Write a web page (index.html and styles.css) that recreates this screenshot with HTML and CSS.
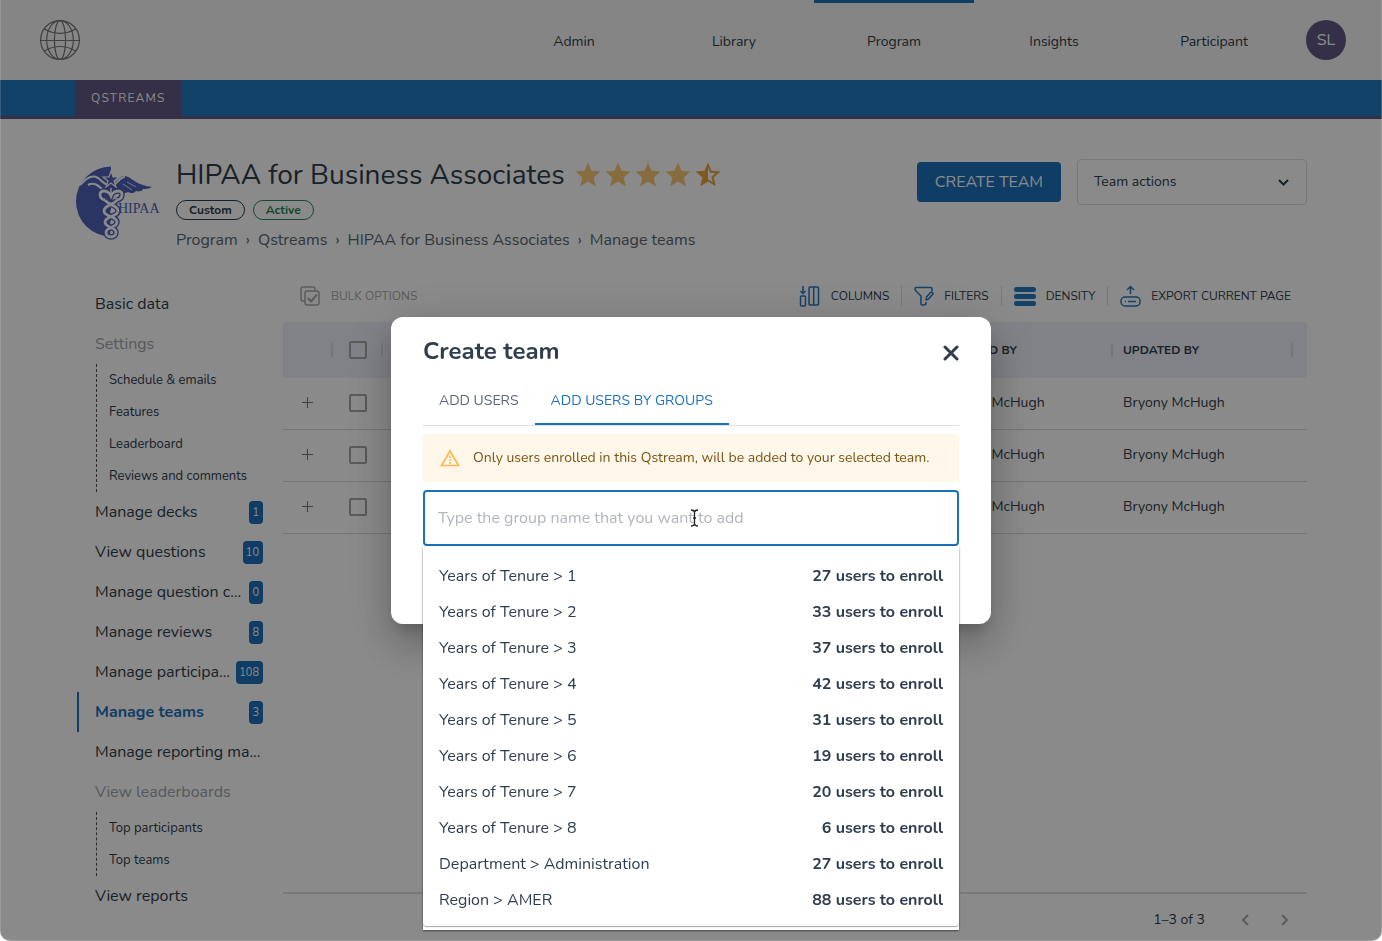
FILE: index.html
```html
<!doctype html>
<html lang="en">
  <head>
    <meta charset="UTF-8" />
    <meta name="viewport" content="width=device-width, initial-scale=1.0" />
    <title>HIPAA for Business Associates - Manage teams</title>
    <link rel="stylesheet" href="styles.css">
  </head>
  <body>
    <header class="topbar">
      <a class="logo" href="#" aria-label="Home">
        <svg width="40" height="40" viewBox="0 0 40 40" fill="none" stroke="currentColor" stroke-width="1.200">
          <circle cx="20" cy="20" r="19.4" />
          <ellipse cx="20" cy="20" rx="13.3" ry="19.4" />
          <ellipse cx="20" cy="20" rx="5.6" ry="19.4" />
          <path d="M.6 20.500h38.800M4.500 9q7 4.300 15.500 4.300T35.500 9M4.500 31q7-4.500 15.500-4.500T35.500 31" />
        </svg>
      </a>
      <nav class="main-nav">
        <a href="#">Admin</a>
        <a href="#">Library</a>
        <a href="#" class="active">Program</a>
        <a href="#">Insights</a>
        <a href="#">Participant</a>
      </nav>
      <button class="avatar">SL</button>
    </header>

    <nav class="subnav">
      <div class="container">
        <a href="#">QSTREAMS</a>
      </div>
    </nav>

    <section class="hero container">
      <svg class="hero-logo" width="85" height="76" viewBox="0 0 85 76">
        <path d="M36 2.500A35 35 0 0 0 36 72.500z" fill="#4f62b8" />
        <!-- wings -->
        <path d="M4 23C10 17 13 12 19 12s8 7 17 8c6-1 7-8 14-8 7 1 10 9 27 11-3 2-7 2-9 2 0 2-4 3-7 2-1 2-5 3-8 1-3 2-7 1-10-2l-7 2-8-2c-7-4-12-7-24-3z" fill="#4f62b8" />
        <path d="M5 21C10 16 13 12.500 19 12.500s8 8 15 8.500M36 28l-8-2c-5-5-9-8-15-5M38 21c5-1 6-8 12-8" fill="none" stroke="#fff" stroke-width="2" />
        <path d="M52 18l9 5M48 20l9 6" stroke="#fff" stroke-width=".8" />
        <path d="M36 7l2 6h6l-5 4 2 6-5-4-5 4 2-6-5-4h6z" fill="#4f62b8" stroke="#fff" stroke-width="1.200" />
        <!-- staff and snakes -->
        <path d="M30 36c-6-1-7-9-1-9 5 0 7 5 7 5s2-5 7-5c6 0 5 8-1 9M30 36c3 5 13 5 13 11s-13 5-13 11 11 5 11 10-5 5-5 5M42 36c-3 5-13 5-13 11s13 5 13 11-11 5-11 10 5 5 5 5" fill="none" stroke="#4f62b8" stroke-width="5.500" />
        <path d="M30 36c-6-1-7-9-1-9 5 0 7 5 7 5s2-5 7-5c6 0 5 8-1 9M30 36c3 5 13 5 13 11s-13 5-13 11 11 5 11 10-5 5-5 5M42 36c-3 5-13 5-13 11s13 5 13 11-11 5-11 10 5 5 5 5" fill="none" stroke="#fff" stroke-width="2.800" />
        <path d="M36 24v8M36 46v3M36 57v3M36 67v3" stroke="#fff" stroke-width="1.500" />
        <text x="43" y="49" class="hero-logo-text">HIPAA</text>
      </svg>
      <div class="hero-info">
        <div class="hero-title">
          <h1>HIPAA for Business Associates</h1>
          <div class="stars" role="img" aria-label="Rated 4.5 out of 5">
            <svg viewBox="0 0 24 24"><path d="M12 17.270L18.180 21l-1.640-7.030L22 9.240l-7.190-.61L12 2 9.190 8.630 2 9.240l5.460 4.730L5.820 21z" /></svg>
            <svg viewBox="0 0 24 24"><path d="M12 17.270L18.180 21l-1.640-7.030L22 9.240l-7.190-.61L12 2 9.190 8.630 2 9.240l5.460 4.730L5.820 21z" /></svg>
            <svg viewBox="0 0 24 24"><path d="M12 17.270L18.180 21l-1.640-7.030L22 9.240l-7.190-.61L12 2 9.190 8.630 2 9.240l5.460 4.730L5.820 21z" /></svg>
            <svg viewBox="0 0 24 24"><path d="M12 17.270L18.180 21l-1.640-7.030L22 9.240l-7.190-.61L12 2 9.190 8.630 2 9.240l5.460 4.730L5.820 21z" /></svg>
            <svg viewBox="0 0 24 24" class="half"><path d="M22 9.240l-7.190-.62L12 2 9.190 8.630 2 9.240l5.460 4.730L5.820 21 12 17.270 18.180 21l-1.630-7.030L22 9.240zM12 15.400V6.100l1.710 4.040 4.380.38-3.320 2.880 1 4.280L12 15.400z" /></svg>
          </div>
        </div>
        <div class="tags">
          <span class="tag">Custom</span>
          <span class="tag tag-active">Active</span>
        </div>
        <nav class="breadcrumbs">
          <a href="#">Program</a><span>›</span><a href="#">Qstreams</a><span>›</span><a href="#">HIPAA for Business Associates</a><span>›</span><a href="#">Manage teams</a>
        </nav>
      </div>
      <div class="hero-actions">
        <button class="btn-primary">CREATE TEAM</button>
        <div class="select-wrap">
          <select aria-label="Team actions">
            <option>Team actions</option>
          </select>
          <svg width="11" height="7" viewBox="0 0 11 7" fill="none" stroke="currentColor" stroke-width="2"><path d="M1 1l4.500 4.500L10 1" /></svg>
        </div>
      </div>
    </section>

    <main class="content container">
      <aside class="sidebar">
        <a class="item" href="#">Basic data</a>
        <span class="item muted">Settings</span>
        <div class="sub">
          <a href="#">Schedule &amp; emails</a>
          <a href="#">Features</a>
          <a href="#">Leaderboard</a>
          <a href="#">Reviews and comments</a>
        </div>
        <a class="item" href="#">Manage decks <span class="badge">1</span></a>
        <a class="item" href="#">View questions <span class="badge">10</span></a>
        <a class="item" href="#">Manage question c... <span class="badge">0</span></a>
        <a class="item" href="#">Manage reviews <span class="badge">8</span></a>
        <a class="item" href="#">Manage participa... <span class="badge">108</span></a>
        <a class="item current" href="#">Manage teams <span class="badge">3</span></a>
        <a class="item" href="#">Manage reporting ma...</a>
        <span class="item muted">View leaderboards</span>
        <div class="sub">
          <a href="#">Top participants</a>
          <a href="#">Top teams</a>
        </div>
        <a class="item" href="#">View reports</a>
      </aside>

      <section class="grid">
        <div class="toolbar">
          <button class="bulk" disabled>
            <svg width="22" height="20" viewBox="-1 0 22 20" fill="none" stroke="currentColor" stroke-width="1.500" stroke-linejoin="round">
              <path d="M4.500 15H3a2 2 0 0 1-2-2V3a2 2 0 0 1 2-2h10a2 2 0 0 1 2 2v1.500" />
              <rect x="5" y="5" width="14" height="14" rx="2" />
              <path d="M8 12l3 3.500 6-7" stroke-width="2" />
            </svg>
            BULK OPTIONS
          </button>
          <button>
            <svg width="22" height="22" viewBox="0 0 22 22" fill="none" stroke="currentColor" stroke-width="1.500">
              <path d="M4 1v7M1.500 6L4 8.500 6.500 6" />
              <rect x="1.500" y="11" width="5" height="10" rx="1" />
              <rect x="10" y="2" width="9.500" height="18" rx="1" />
              <path d="M14.700 2v18" />
            </svg>
            COLUMNS
          </button>
          <button>
            <svg width="20" height="20" viewBox="0 0 20 20" fill="none" stroke="currentColor" stroke-width="1.500" stroke-linejoin="round">
              <path d="M18 5V2.500q0-1-1-1H2q-1 0-1 1 0 2 2 3.500l4 4v8q0 1 1 1h2q2 0 2-2v-1" />
              <path d="M12 14l.5-3 4-4.500q1-1 2 0t0 2l-4 4.500z" />
            </svg>
            FILTERS
          </button>
          <button>
            <svg width="22" height="20" viewBox="0 0 22 20" fill="currentColor">
              <rect x="0" y="1" width="22" height="5" rx="2.500" />
              <rect x="0" y="8" width="22" height="5" rx="2.500" />
              <rect x="0" y="15" width="22" height="5" rx="2.500" />
            </svg>
            DENSITY
          </button>
          <button>
            <svg width="21" height="22" viewBox="0 0 21 22" fill="none" stroke="currentColor" stroke-width="1.500">
              <path d="M10.500 9V1.500M7 5l3.500-3.500L14 5" />
              <rect x="1" y="12" width="19" height="9" rx="4" />
              <path d="M8 16.500h8M5 16.500h1.200" />
            </svg>
            EXPORT CURRENT PAGE
          </button>
        </div>

        <div class="table-wrap">
          <table>
            <colgroup>
              <col class="col-icon" />
              <col class="col-icon" />
              <col />
              <col class="col-user" />
              <col class="col-user" />
              <col class="col-end" />
            </colgroup>
            <thead>
              <tr>
                <th></th>
                <th class="check"><input type="checkbox" aria-label="Select all teams" /></th>
                <th></th>
                <th>CREATED BY</th>
                <th>UPDATED BY</th>
                <th></th>
              </tr>
            </thead>
            <tbody>
              <tr>
                <td class="expand"><button aria-label="Expand row"></button></td>
                <td class="check"><input type="checkbox" aria-label="Select team" /></td>
                <td></td>
                <td>Bryony McHugh</td>
                <td>Bryony McHugh</td>
                <td></td>
              </tr>
              <tr>
                <td class="expand"><button aria-label="Expand row"></button></td>
                <td class="check"><input type="checkbox" aria-label="Select team" /></td>
                <td></td>
                <td>Bryony McHugh</td>
                <td>Bryony McHugh</td>
                <td></td>
              </tr>
              <tr>
                <td class="expand"><button aria-label="Expand row"></button></td>
                <td class="check"><input type="checkbox" aria-label="Select team" /></td>
                <td></td>
                <td>Bryony McHugh</td>
                <td>Bryony McHugh</td>
                <td></td>
              </tr>
            </tbody>
          </table>
        </div>

        <div class="pagination">
          <span>1–3 of 3</span>
          <button aria-label="Previous page" disabled>
            <svg width="8" height="12" viewBox="0 0 8 12" fill="none" stroke="currentColor" stroke-width="2"><path d="M7 1L2 6l5 5" /></svg>
          </button>
          <button aria-label="Next page" disabled>
            <svg width="8" height="12" viewBox="0 0 8 12" fill="none" stroke="currentColor" stroke-width="2"><path d="M1 1l5 5-5 5" /></svg>
          </button>
        </div>
      </section>
    </main>

    <div class="backdrop">
      <div class="modal" role="dialog" aria-labelledby="modalTitle">
        <div class="modal-head">
          <h2 id="modalTitle">Create team</h2>
          <button class="close" aria-label="Close">
            <svg width="16" height="16" viewBox="0 0 16 16" stroke="currentColor" stroke-width="3" stroke-linecap="round"><path d="M2 2l12 12M14 2L2 14" /></svg>
          </button>
        </div>
        <div class="tabs" role="tablist">
          <button role="tab">ADD USERS</button>
          <button role="tab" class="selected" aria-selected="true">ADD USERS BY GROUPS</button>
        </div>
        <div class="alert">
          <svg width="20" height="18" viewBox="0 0 20 18" fill="none" stroke="currentColor" stroke-width="1.700">
            <path d="M10 2L1.500 16.500h17z" />
            <path d="M10 7v5M10 13v2" stroke-dasharray="2 1" />
          </svg>
          Only users enrolled in this Qstream, will be added to your selected team.
        </div>
        <div class="search">
          <input type="text" aria-label="Group name" placeholder="Type the group name that you want to add" />
          <svg class="cursor" width="9" height="18" viewBox="0 0 9 18" fill="none" stroke="#222" stroke-width="1.300"><path d="M1 1q3 0 3.500 2Q5 1 8 1M1 17q3 0 3.500-2Q5 17 8 17M4.500 3v12M3 9h3" /></svg>
          <div class="menu">
            <ul role="listbox">
              <li role="option"><span>Years of Tenure &gt; 1</span><b>27 users to enroll</b></li>
              <li role="option"><span>Years of Tenure &gt; 2</span><b>33 users to enroll</b></li>
              <li role="option"><span>Years of Tenure &gt; 3</span><b>37 users to enroll</b></li>
              <li role="option"><span>Years of Tenure &gt; 4</span><b>42 users to enroll</b></li>
              <li role="option"><span>Years of Tenure &gt; 5</span><b>31 users to enroll</b></li>
              <li role="option"><span>Years of Tenure &gt; 6</span><b>19 users to enroll</b></li>
              <li role="option"><span>Years of Tenure &gt; 7</span><b>20 users to enroll</b></li>
              <li role="option"><span>Years of Tenure &gt; 8</span><b>6 users to enroll</b></li>
              <li role="option"><span>Department &gt; Administration</span><b>27 users to enroll</b></li>
              <li role="option"><span>Region &gt; AMER</span><b>88 users to enroll</b></li>
            </ul>
          </div>
        </div>
      </div>
    </div>
  </body>
</html>
```
FILE: styles.css
```css
* {
  box-sizing: border-box;
}
body {
  margin: 0;
  min-height: 100vh;
  display: flex;
  flex-direction: column;
  background: #fff;
  color: #2f3d4c;
  font-family: Nunito, "Open Sans", sans-serif;
  font-size: 16px;
  line-height: 24px;
}
a {
  color: inherit;
  text-decoration: none;
}
button,
input,
select {
  font: inherit;
  color: inherit;
}
button {
  border: 0;
  padding: 0;
  background: none;
  cursor: pointer;
}
svg {
  display: block;
  flex: none;
}
.container {
  width: 100%;
  max-width: 1232px;
  margin: 0 auto;
}

/* header */
.topbar {
  display: flex;
  align-items: center;
  height: 80px;
  padding: 0 36px 0 40px;
  background: #f5f5f5;
}
.logo {
  color: #777;
}
.main-nav {
  display: flex;
  margin-left: auto;
  margin-right: 12px;
}
.main-nav a {
  width: 160px;
  height: 80px;
  border-top: 3px solid transparent;
  text-align: center;
  font-size: 14px;
  line-height: 77px;
}
.main-nav .active {
  border-color: #1c71bb;
}
.avatar {
  width: 40px;
  height: 40px;
  border-radius: 50%;
  background: #625784;
  color: #fff;
}
.subnav {
  background: #247ac3;
  border-bottom: 3px solid #625784;
}
.subnav a {
  display: inline-block;
  padding: 0 16px;
  background: #625784;
  color: #fff;
  font-size: 12px;
  letter-spacing: 0.1em;
  line-height: 36px;
  vertical-align: top;
}

/* title block */
.hero {
  display: flex;
  padding-top: 40px;
}
.hero-logo {
  margin: 5px 16px 0 0;
}
.hero-logo-text {
  fill: #4f62b8;
  font-family: "Liberation Serif", serif;
  font-size: 14px;
}
.hero-title {
  display: flex;
  align-items: center;
  gap: 8px;
  height: 32px;
}
h1 {
  margin: 0;
  font-size: 28px;
  font-weight: 400;
  line-height: 32px;
}
.stars {
  display: flex;
}
.stars svg {
  width: 30px;
  height: 30px;
  fill: #f8c874;
}
.stars .half {
  fill: #eaa540;
}
.tags {
  display: flex;
  gap: 8px;
  margin-top: 9px;
}
.tag {
  padding: 0 12px;
  border: 1px solid #2f3d4c;
  border-radius: 10px;
  font-size: 12px;
  font-weight: 700;
  line-height: 18px;
}
.tag-active {
  border-color: #27885a;
  color: #27885a;
}
.breadcrumbs {
  display: flex;
  gap: 8px;
  margin-top: 8px;
  color: #596673;
}
.hero-actions {
  display: flex;
  align-items: center;
  gap: 16px;
  height: 46px;
  margin-left: auto;
}
.btn-primary {
  height: 40px;
  padding: 0 18px;
  border-radius: 4px;
  background: #1c71bb;
  color: #fff;
}
.select-wrap {
  position: relative;
}
.select-wrap select {
  width: 230px;
  height: 46px;
  padding: 0 16px;
  border: 1px solid #e0e0e0;
  border-radius: 4px;
  background: none;
  appearance: none;
  font-size: 14px;
}
.select-wrap svg {
  position: absolute;
  right: 18px;
  top: 20px;
  pointer-events: none;
}

/* sidebar */
.content {
  display: flex;
  flex: 1;
  gap: 20px;
  margin-top: 24px;
}
.sidebar {
  width: 188px;
  padding: 8px 0 0 2px;
}
.item {
  display: flex;
  align-items: center;
  justify-content: space-between;
  height: 40px;
  padding-left: 16px;
  border-left: 2px solid transparent;
  white-space: nowrap;
}
.muted {
  color: #9ea5ad;
}
.current {
  border-color: #1c71bb;
  color: #1c71bb;
  font-weight: 700;
}
.badge {
  padding: 0 4px 0 3px;
  border-radius: 4px;
  background: #1c71bb;
  color: #fff;
  font-size: 11px;
  font-weight: 400;
  line-height: 23px;
}
.sub {
  margin-left: 19px;
  padding-left: 12px;
  border-left: 1px dashed #555;
}
.sub a {
  display: block;
  font-size: 13px;
  line-height: 32px;
}

/* data grid */
.grid {
  display: flex;
  flex: 1;
  flex-direction: column;
}
.toolbar {
  display: flex;
  align-items: center;
  height: 46px;
  padding: 0 4px 6px;
}
.toolbar button {
  display: flex;
  align-items: center;
  gap: 10px;
  height: 20px;
  padding: 0 12px;
  font-size: 12px;
}
.toolbar button + button {
  border-left: 1px solid #ddd;
}
.toolbar .bulk {
  margin-right: auto;
  color: #aaa;
}
.toolbar .bulk + button {
  border-left: 0;
}
.toolbar svg {
  color: #247ac3;
}
.toolbar .bulk svg {
  color: #aaa;
}
.table-wrap {
  flex: 1;
  border-bottom: 2px solid #e0e0e0;
}
table {
  width: 100%;
  table-layout: fixed;
  border-collapse: separate;
  border-spacing: 0;
  font-size: 14px;
}
.col-icon {
  width: 50px;
}
.col-user {
  width: 180px;
}
.col-end {
  width: 14px;
}
th {
  height: 56px;
  padding: 0 10px;
  background: linear-gradient(#ddd, #ddd) no-repeat right center / 2px 14px #eef1fa;
  font-size: 12px;
  text-align: left;
}
th:first-child {
  border-radius: 4px 0 0 4px;
}
th:last-child {
  border-radius: 0 4px 4px 0;
  background: #eef1fa;
}
td {
  height: 52px;
  padding: 0 10px 2px;
  border-bottom: 1px solid #d8d8d8;
}
.check,
.expand {
  padding-left: 0;
  padding-right: 0;
}
.expand {
  padding-right: 2px;
}
.check input {
  display: block;
  width: 18px;
  height: 18px;
  margin: 0 auto;
  border: 2px solid #a8a8a8;
  border-radius: 2px;
  appearance: none;
}
.expand button {
  display: block;
  width: 11px;
  height: 11px;
  margin: 0 auto;
  background:
    linear-gradient(#777, #777) no-repeat center / 11px 1px,
    linear-gradient(#777, #777) no-repeat center / 1px 11px;
}
.pagination {
  display: flex;
  align-items: center;
  justify-content: flex-end;
  gap: 8px;
  padding: 10px 6px 5px;
  font-size: 14px;
}
.pagination span {
  margin-right: 16px;
}
.pagination button {
  display: flex;
  align-items: center;
  justify-content: center;
  width: 32px;
  height: 32px;
  color: #aaa;
}

/* create team dialog */
.backdrop {
  position: fixed;
  inset: 0;
  display: flex;
  align-items: center;
  justify-content: center;
  border: 1px solid rgba(255, 255, 255, 0.15);
  border-top: 0;
  border-radius: 0 0 10px 10px;
  background: rgba(0, 0, 0, 0.46);
}
.modal {
  width: 600px;
  padding: 16px 32px 78px;
  border-radius: 12px;
  background: #fff;
  box-shadow:
    0 11px 15px -7px rgba(0, 0, 0, 0.2),
    0 24px 38px 3px rgba(0, 0, 0, 0.14),
    0 9px 46px 8px rgba(0, 0, 0, 0.12);
}
.modal-head {
  display: flex;
  align-items: center;
  justify-content: space-between;
  height: 36px;
}
h2 {
  margin: 0;
  font-size: 24px;
  line-height: 36px;
}
.close {
  padding-top: 4px;
}
.tabs {
  display: flex;
  margin-top: 8px;
  border-bottom: 1px solid #e0e0e0;
}
.tabs button {
  height: 48px;
  padding: 2px 16px 0;
  border-bottom: 2px solid transparent;
  color: #5b6671;
  font-size: 14px;
}
.tabs .selected {
  border-color: #1c71bb;
  color: #1c71bb;
}
.alert {
  display: flex;
  align-items: center;
  gap: 13px;
  height: 48px;
  margin: 8px 0;
  padding: 0 17px;
  border-radius: 4px;
  background: #fff7ea;
  color: #7a5311;
  font-size: 14px;
  white-space: nowrap;
}
.alert svg {
  color: #fdb94b;
}
.search {
  position: relative;
}
.search input {
  display: block;
  width: 100%;
  height: 56px;
  padding: 0 13px;
  border: 2px solid #1c71bb;
  border-radius: 4px;
  outline: 0;
}
.search input::placeholder {
  color: #b1b6bc;
}
.cursor {
  position: absolute;
  left: 267px;
  top: 19px;
}
.menu {
  position: absolute;
  top: 100%;
  left: 0;
  right: 0;
  padding: 4px 0;
  background: #fff;
  box-shadow: 0 1px 2px rgba(0, 0, 0, 0.5);
}
.menu ul {
  margin: 0;
  padding: 8px 0;
  border-radius: 4px;
  box-shadow: 0 1px 1px rgba(0, 0, 0, 0.35);
  list-style: none;
}
.menu li {
  display: flex;
  justify-content: space-between;
  padding: 6px 16px;
}
```
